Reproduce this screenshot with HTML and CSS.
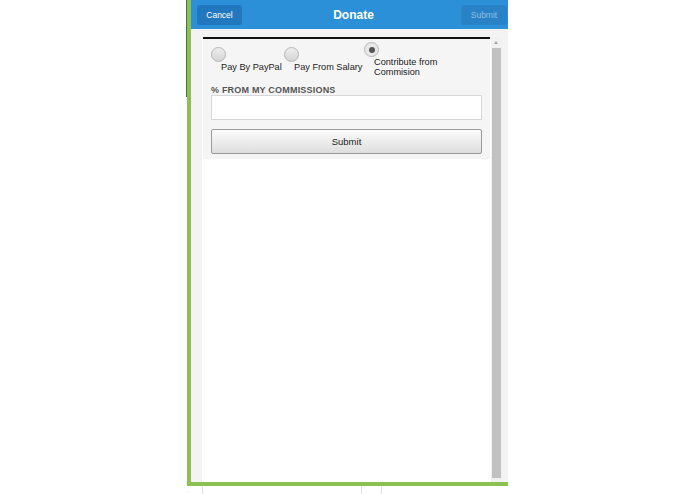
FILE: index.html
```html
<!DOCTYPE html>
<html>
<head>
<meta charset="utf-8">
<link rel="stylesheet" href="styles.css">
</head>
<body>
<div class="page">
  <div class="frame">
    <div class="header">
      <button class="hbtn">Cancel</button>
      <div class="title">Donate</div>
      <button class="hbtn faded">Submit</button>
    </div>
    <div class="body">
      <div class="panel">
        <div class="form">
          <div class="radios">
            <label class="radio r1"><span class="dot"></span><span class="lbl">Pay By PayPal</span></label>
            <label class="radio r2"><span class="dot"></span><span class="lbl">Pay From Salary</span></label>
            <label class="radio r3 up"><span class="dot on"></span><span class="lbl">Contribute from<br>Commision</span></label>
          </div>
          <div class="caption">% FROM MY COMMISSIONS</div>
          <div class="input"></div>
          <button class="submit">Submit</button>
        </div>
      </div>
      <div class="scroll">
        <div class="arrow"></div>
        <div class="thumb"></div>
      </div>
    </div>
  </div>
  <div class="below">
    <span class="c1"></span><span class="c2"></span><span class="c3"></span><span class="c4"></span>
  </div>
</div>
</body>
</html>
```
FILE: styles.css
```css
html, body { margin: 0; padding: 0; background: #fff; }
body { font-family: "Liberation Sans", Arial, sans-serif; }
.page { width: 695px; height: 494px; overflow: hidden; padding-left: 187px; box-sizing: border-box; }
.frame {
  position: relative;
  width: 321px; height: 486px; box-sizing: border-box;
  border-left: 4px solid #8cc152; border-bottom: 4px solid #8cc152;
  display: flex; flex-direction: column;
}
.frame::before {
  content: ""; position: absolute; left: -5px; top: 0; width: 1px; height: 97px; background: #4d6b45;
}
.header {
  height: 29px; background: #2c90d9; display: flex; align-items: center;
  justify-content: space-between; padding: 0 1px 0 6px;
}
.hbtn {
  font-family: inherit; font-size: 8.5px; color: #fff; background: #2278be; border: none;
  border-radius: 3px; height: 20px; width: 45px; padding: 0; margin: 0;
}
.hbtn.faded { color: #8fbfe3; background: #2a82c6; width: 46px; }
.title { color: #fff; font-weight: bold; font-size: 12px; margin-left: 4px; }
.body { flex: 1; background: #f3f3f3; display: flex; padding: 8px 6px 0 11px; }
.panel { width: 289px; background: #fff; }
.form { background: #f5f5f5; border-top: 2px solid #111; margin: 0 1px; padding: 0 8px 4px; height: 116px; }
.radios { display: flex; height: 47px; }
.radio { position: relative; display: block; font-size: 9.2px; color: #222; line-height: 9.5px; }
.dot {
  position: absolute; width: 13px; height: 13px; border-radius: 50%;
  border: 1px solid #b5b5b5; background: linear-gradient(#eee, #d4d4d4);
}
.dot.on { background: #e8e8e8; }
.dot.on::after { content: ""; position: absolute; left: 3.5px; top: 3.5px; width: 6px; height: 6px; border-radius: 50%; background: #555; }
.r1 { width: 73px; }
.r2 { width: 80px; }
.r1 .dot, .r2 .dot { top: 8px; left: 0; }
.r1 .lbl, .r2 .lbl { position: absolute; top: 24px; left: 10px; white-space: nowrap; }
.r3 .dot { top: 3px; left: 0; }
.r3 .lbl { position: absolute; top: 19px; left: 10px; white-space: nowrap; }
.caption { font-size: 9px; font-weight: bold; color: #555; letter-spacing: 0.2px; line-height: 9px; }
.input { height: 25px; background: #fff; border: 1px solid #d8d8d8; box-sizing: border-box; margin-top: 0; }
.submit {
  display: block; width: 100%; height: 25px; margin-top: 9px; font-family: inherit; font-size: 9.5px; color: #222;
  border: 1px solid #9a9a9a; border-radius: 2px; background: linear-gradient(#fbfbfb, #dedede);
}
.scroll { width: 11px; position: relative; margin-left: 0; background: #f1f1f1; }
.arrow { position: absolute; left: 3px; top: 4px; width: 0; height: 0; border-left: 2.5px solid transparent; border-right: 2.5px solid transparent; border-bottom: 3px solid #a3a3a3; }
.thumb { position: absolute; left: 1px; right: 1px; top: 11px; bottom: 4px; background: #c1c1c1; }
.below { position: relative; height: 8px; width: 245px; }
.below .c4 { position: absolute; left: 1px; right: 0; top: 5px; height: 1px; background: #e4e4e4; }
.below span { position: absolute; top: 0; width: 1px; height: 8px; background: #e2e2e2; }
.below .c1 { left: 15px; }
.below .c2 { left: 174px; }
.below .c3 { left: 194px; }
```
